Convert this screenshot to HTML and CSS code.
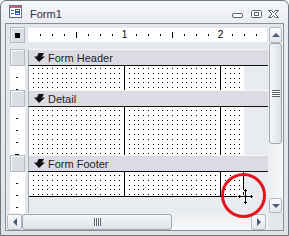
FILE: index.html
```html
<!DOCTYPE html>
<html>
<head>
<meta charset="utf-8">
<link rel="stylesheet" href="styles.css">
</head>
<body>
<div class="window">
  <div class="titlebar">
    <svg class="app-icon" width="13" height="13" viewBox="0 0 13 13">
      <rect x="0.5" y="0.5" width="12" height="12" fill="#fff" stroke="#6e6c8e"/>
      <rect x="1" y="1" width="11" height="2" fill="#d2587c"/>
      <rect x="2" y="5" width="3" height="1" fill="#3a5ca4"/>
      <rect x="2" y="8" width="3" height="1" fill="#3a5ca4"/>
      <rect x="6.5" y="4.5" width="4" height="2" fill="none" stroke="#3a5ca4"/>
      <rect x="6.5" y="7.5" width="4" height="2" fill="none" stroke="#3a5ca4"/>
    </svg>
    <span class="title">Form1</span>
    <div class="controls">
      <svg class="ctl-min" width="11" height="5" viewBox="0 0 11 5"><rect x="0.5" y="0.5" width="10" height="4" rx="1.5" fill="#fff" stroke="#5b6472"/></svg>
      <svg class="ctl-restore" width="11" height="8" viewBox="0 0 11 8"><rect x="0.5" y="0.5" width="10" height="7" rx="1" fill="#fff" stroke="#5b6472"/><rect x="3.5" y="2.5" width="4" height="3" fill="none" stroke="#5b6472"/></svg>
      <svg class="ctl-close" width="11" height="8" viewBox="0 0 11 8"><polygon points="0.5,0.5 3.5,0.5 5.5,2.5 7.5,0.5 10.5,0.5 7,4 10.5,7.5 7.5,7.5 5.5,5.5 3.5,7.5 0.5,7.5 4,4" fill="#fff" stroke="#5b6472" stroke-linejoin="round"/></svg>
    </div>
  </div>
  <div class="client">
    <div class="ruler-corner"><span class="sel-square"></span></div>
    <div class="ruler-h">
      <div class="inch"><span>1</span></div>
      <div class="inch"><span>2</span></div>
    </div>
    <div class="sections">
      <div class="sel"></div>
      <div class="bar"><svg class="sec-icon" width="11" height="9" viewBox="0 0 11 9"><polygon points="4.5,0 10,0 8,3.5 11,3.5 5,9 0,3.5 3,3.5" fill="#111"/></svg><span>Form Header</span></div>
      <div class="vr"></div>
      <div class="content"><div class="grid"></div></div>

      <div class="sel"></div>
      <div class="bar"><svg class="sec-icon" width="11" height="9" viewBox="0 0 11 9"><polygon points="4.5,0 10,0 8,3.5 11,3.5 5,9 0,3.5 3,3.5" fill="#111"/></svg><span>Detail</span></div>
      <div class="vr"></div>
      <div class="content"><div class="grid g3"></div></div>

      <div class="sel"></div>
      <div class="bar"><svg class="sec-icon" width="11" height="9" viewBox="0 0 11 9"><polygon points="4.5,0 10,0 8,3.5 11,3.5 5,9 0,3.5 3,3.5" fill="#111"/></svg><span>Form Footer</span></div>
      <div class="vr"></div>
      <div class="content foot"><div class="grid g3 last"></div></div>
    </div>
    <div class="vscroll">
      <div class="sbtn up"><i class="arr-up"></i></div>
      <div class="thumb-v"><i class="grip-v"></i></div>
      <div class="track"></div>
      <div class="sbtn down"><i class="arr-down"></i></div>
    </div>
    <div class="hscroll">
      <div class="sbtn left"><i class="arr-left"></i></div>
      <div class="thumb-h"><i class="grip-h"></i></div>
      <div class="track"></div>
      <div class="sbtn right"><i class="arr-right"></i></div>
    </div>
    <div class="corner"></div>
  </div>
  <div class="mark"></div>
  <svg class="cursor" width="17" height="17" viewBox="0 0 17 17">
    <polygon points="8.5,0.5 11.5,3.5 9.5,3.5 9.5,7.5 13.5,7.5 13.5,5.5 16.5,8.5 13.5,11.5 13.5,9.5 9.5,9.5 9.5,13.5 11.5,13.5 8.5,16.5 5.5,13.5 7.5,13.5 7.5,9.5 3.5,9.5 3.5,11.5 0.5,8.5 3.5,5.5 3.5,7.5 7.5,7.5 7.5,3.5 5.5,3.5" fill="#000" stroke="#fff" stroke-width="1"/>
  </svg>
</div>
</body>
</html>
```

FILE: styles.css
```css
body {
  margin: 0;
  background: #fff;
}

.window {
  position: relative;
  width: 289px;
  height: 236px;
  box-sizing: border-box;
  border: 1px solid #6f7782;
  border-radius: 6px 6px 0 0;
  background: linear-gradient(#f6f7f9 0, #eaedf0 22px, #dfe3e8 100%);
  display: flex;
  flex-direction: column;
  overflow: hidden;
  font-family: "Liberation Sans", Arial, sans-serif;
}

.titlebar {
  flex: none;
  height: 22px;
  display: flex;
  align-items: flex-start;
  padding-left: 8px;
}

.app-icon {
  margin-top: 4px;
  flex: none;
}

.title {
  margin-left: 8px;
  margin-top: 7px;
  font-size: 11px;
  line-height: 13px;
  color: #2f2d4a;
}

.controls {
  margin-left: auto;
  margin-right: 9px;
  margin-top: 9px;
  display: flex;
  align-items: flex-start;
}

.ctl-min { margin-top: 3px; }
.ctl-restore { margin-left: 8px; }
.ctl-close { margin-left: 6px; }

.client {
  flex: 1;
  margin: 0 4px 4px;
  border: 1px solid #878e98;
  background: #e4e7eb;
  display: grid;
  grid-template-columns: 4px 15px 3px 240px 15px;
  grid-template-rows: 3px 16px 6px 164px 17px;
}

.ruler-corner {
  grid-row: 2;
  grid-column: 2;
  box-sizing: border-box;
  border: 1px solid #b5bbc3;
  background: #dadde2;
  box-shadow: inset 1px 1px 0 #f6f7f9;
  display: flex;
  align-items: center;
  justify-content: center;
}

.sel-square {
  width: 5px;
  height: 5px;
  background: #000;
}

.ruler-h {
  grid-row: 2;
  grid-column: 4;
  margin: 1px 1px 1px 0;
  display: flex;
  background:
    repeating-linear-gradient(90deg, #000 0 1px, transparent 1px 96px) 48px 4px / calc(100% - 48px) 6px no-repeat,
    repeating-linear-gradient(90deg, #000 0 1px, transparent 1px 12px) 12px 6px / calc(100% - 12px) 2px no-repeat,
    #fff;
}

.inch {
  width: 96px;
  flex: none;
  display: flex;
  justify-content: flex-end;
  align-items: center;
}

.inch span {
  width: 7px;
  margin-right: -4px;
  text-align: center;
  background: #fff;
  font-size: 10px;
  line-height: 10px;
  color: #000;
}

.sections {
  grid-row: 4;
  grid-column: 2 / 5;
  display: grid;
  grid-template-columns: 15px 3px 240px;
  grid-template-rows: 17px 24px 17px 48px 17px 41px;
}

.sel {
  grid-column: 1;
  box-sizing: border-box;
  border: 1px solid #b5bbc3;
  background: #dadde2;
  box-shadow: inset 1px 1px 0 #f6f7f9;
}

.vr {
  grid-column: 1;
  background:
    repeating-linear-gradient(#000 0 1px, transparent 1px 96px) 5px 47px / 4px calc(100% - 47px) no-repeat,
    repeating-linear-gradient(#000 0 1px, transparent 1px 12px) 6px 11px / 2px calc(100% - 11px) no-repeat,
    #fff;
}

.bar {
  grid-column: 3;
  box-sizing: border-box;
  background: #dcdbe4;
  border-top: 1px solid #f7f7fa;
  border-bottom: 1px solid #111;
  border-left: 1px solid #a9afb7;
  display: flex;
  align-items: center;
  padding-left: 5px;
  gap: 3px;
  font-size: 11px;
  color: #1c1c28;
}

.sec-icon { flex: none; }

.content {
  grid-column: 3;
  border-left: 1px solid #a9afb7;
  background: #e8ebef;
  display: flex;
  align-items: flex-start;
}

.grid {
  width: 215px;
  height: 100%;
  flex: none;
  box-sizing: border-box;
  background:
    linear-gradient(90deg, #000 1px, transparent 1px) -1px 0 / 96px 100%,
    linear-gradient(90deg, transparent 0 1px, #fff 1px 5px, transparent 5px 6px, #fff 6px 10px, transparent 10px 11px, #fff 11px 14px, transparent 14px 15px, #fff 15px 19px, transparent 19px 20px, #fff 20px) -1px 0 / 24px 100%,
    linear-gradient(180deg, transparent 0 1px, #fff 1px 5px, transparent 5px 6px, #fff 6px 10px, transparent 10px 11px, #fff 11px 14px, transparent 14px 15px, #fff 15px 19px, transparent 19px 20px, #fff 20px) 0 2px / 100% 24px,
    #000;
}

.grid.g3 {
  background-position: -1px 0, -1px 0, 0 3px;
}

.grid.last {
  height: 25px;
  border-right: 1px solid #000;
  border-bottom: 1px solid #000;
}

/* scrollbars */
.vscroll {
  grid-row: 2 / 5;
  grid-column: 5;
  display: flex;
  flex-direction: column;
  padding: 0 1px 0 1px;
  background: linear-gradient(90deg, #eceef1, #f7f8f9);
}

.hscroll {
  grid-row: 5;
  grid-column: 1 / 5;
  display: flex;
  padding: 1px 2px 0 1px;
  background: linear-gradient(#eceef1, #f7f8f9);
}

.corner {
  grid-row: 5;
  grid-column: 5;
}

.track { flex: 1; }

.sbtn {
  box-sizing: border-box;
  border: 1px solid #b3b9c1;
  border-radius: 2px;
  background: linear-gradient(#f9fafb, #e4e7eb);
  display: flex;
  align-items: center;
  justify-content: center;
  flex: none;
}

.vscroll .sbtn { height: 16px; }
.vscroll .sbtn.down { height: 15px; }
.hscroll .sbtn { width: 15px; }

.thumb-v {
  height: 101px;
  flex: none;
  box-sizing: border-box;
  border: 1px solid #9ea6b0;
  border-radius: 3px;
  background: linear-gradient(90deg, #f6f7f9, #dde1e6);
  display: flex;
  align-items: center;
  justify-content: center;
}

.thumb-h {
  width: 150px;
  flex: none;
  box-sizing: border-box;
  border: 1px solid #9ea6b0;
  border-radius: 3px;
  background: linear-gradient(#f6f7f9, #dde1e6);
  display: flex;
  align-items: center;
  justify-content: center;
}

.grip-v {
  width: 8px;
  height: 7px;
  background: repeating-linear-gradient(#5c6470 0 1px, #fbfbfc 1px 2px);
}

.grip-h {
  width: 7px;
  height: 8px;
  background: repeating-linear-gradient(90deg, #5c6470 0 1px, #fbfbfc 1px 2px);
}

.arr-up, .arr-down, .arr-left, .arr-right {
  width: 0;
  height: 0;
  border-style: solid;
  border-color: transparent;
}

.arr-up {
  border-width: 0 4px 4px 4px;
  border-bottom-color: #4a5b7c;
}

.arr-down {
  border-width: 4px 4px 0 4px;
  border-top-color: #4a5b7c;
}

.arr-left {
  border-width: 4px 4px 4px 0;
  border-right-color: #4a5b7c;
}

.arr-right {
  border-width: 4px 0 4px 4px;
  border-left-color: #4a5b7c;
}

/* overlay annotation */
.mark {
  position: absolute;
  left: 220px;
  top: 172px;
  width: 45px;
  height: 45px;
  box-sizing: border-box;
  border: 3px solid #e5141c;
  border-radius: 50%;
}

.cursor {
  position: absolute;
  left: 236px;
  top: 187px;
}
```
